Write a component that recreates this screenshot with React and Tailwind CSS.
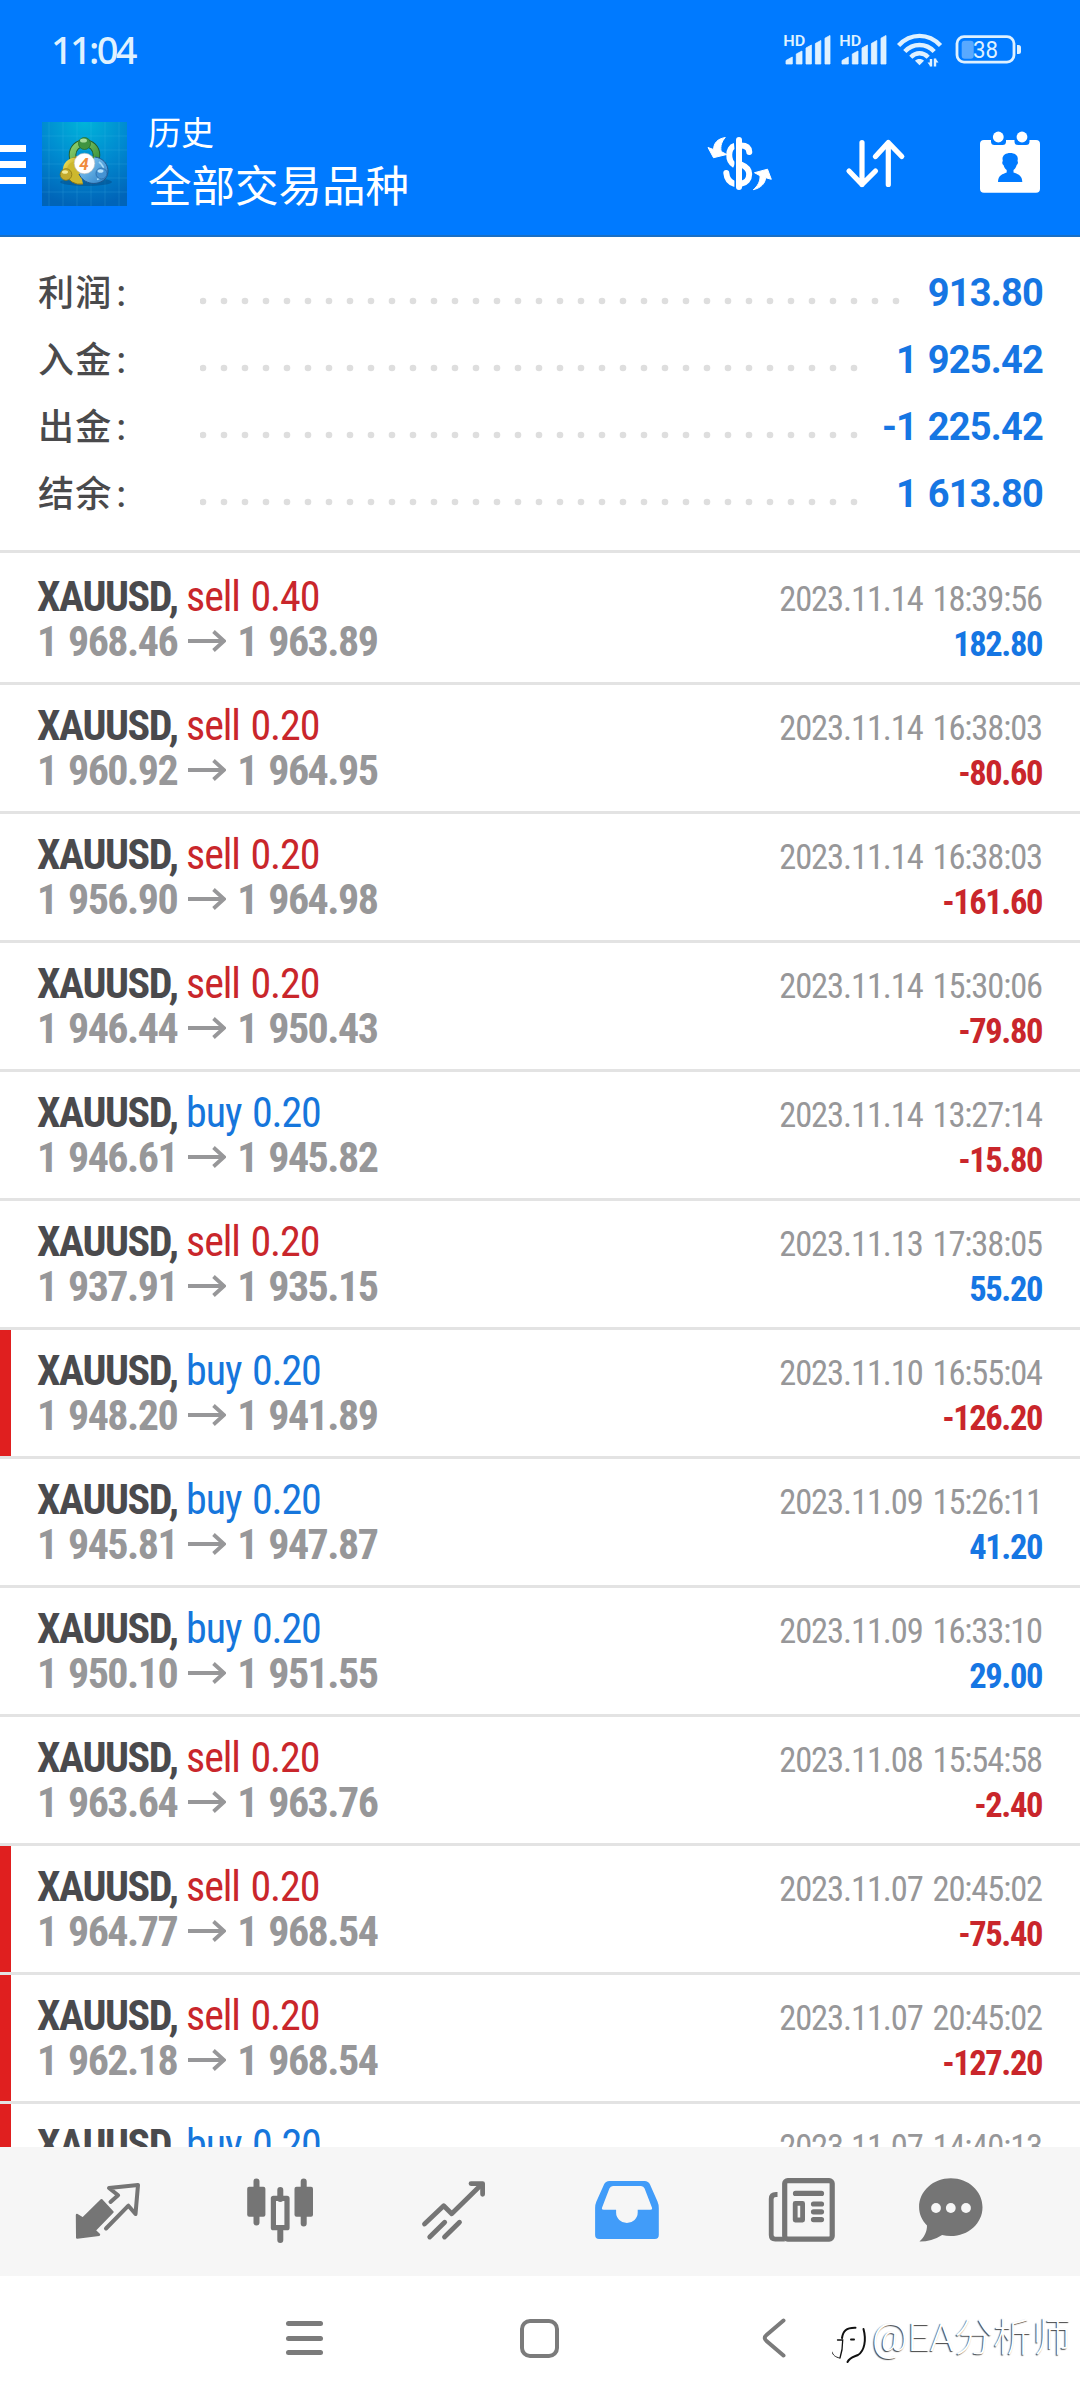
const SUMMARY = [
  { label: '利润', value: '913.80', dots: 34 },
  { label: '入金', value: '1 925.42', dots: 32 },
  { label: '出金', value: '-1 225.42', dots: 32 },
  { label: '结余', value: '1 613.80', dots: 32 },
]

const DEALS = [
  { side: 'sell', volume: '0.40', open: '1 968.46', close: '1 963.89', time: '2023.11.14 18:39:56', profit: '182.80' },
  { side: 'sell', volume: '0.20', open: '1 960.92', close: '1 964.95', time: '2023.11.14 16:38:03', profit: '-80.60' },
  { side: 'sell', volume: '0.20', open: '1 956.90', close: '1 964.98', time: '2023.11.14 16:38:03', profit: '-161.60' },
  { side: 'sell', volume: '0.20', open: '1 946.44', close: '1 950.43', time: '2023.11.14 15:30:06', profit: '-79.80' },
  { side: 'buy', volume: '0.20', open: '1 946.61', close: '1 945.82', time: '2023.11.14 13:27:14', profit: '-15.80' },
  { side: 'sell', volume: '0.20', open: '1 937.91', close: '1 935.15', time: '2023.11.13 17:38:05', profit: '55.20' },
  { side: 'buy', volume: '0.20', open: '1 948.20', close: '1 941.89', time: '2023.11.10 16:55:04', profit: '-126.20', stop: true },
  { side: 'buy', volume: '0.20', open: '1 945.81', close: '1 947.87', time: '2023.11.09 15:26:11', profit: '41.20' },
  { side: 'buy', volume: '0.20', open: '1 950.10', close: '1 951.55', time: '2023.11.09 16:33:10', profit: '29.00' },
  { side: 'sell', volume: '0.20', open: '1 963.64', close: '1 963.76', time: '2023.11.08 15:54:58', profit: '-2.40' },
  { side: 'sell', volume: '0.20', open: '1 964.77', close: '1 968.54', time: '2023.11.07 20:45:02', profit: '-75.40', stop: true },
  { side: 'sell', volume: '0.20', open: '1 962.18', close: '1 968.54', time: '2023.11.07 20:45:02', profit: '-127.20', stop: true },
  { side: 'buy', volume: '0.20', time: '2023.11.07 14:40:13', stop: true },
]

function Signal() {
  return (
    <svg width="56" height="40" viewBox="0 0 56 40" fill="currentColor">
      <text x="3.2" y="16" fontSize="15" fontWeight="600" textLength="22" lengthAdjust="spacingAndGlyphs">HD</text>
      <path d="M6 34v-3.5l6.3-3.5v7zM16.3 34V24l5.7-3v13zM26 34V18l5.4-3v19zM35.4 34V13.5l5.4-3V34zM45 34V8.2l5-2.7V34z" stroke="currentColor" strokeWidth="0.8" strokeLinejoin="round" />
    </svg>
  )
}

function Wifi() {
  return (
    <svg width="50" height="40" viewBox="0 0 50 40" fill="none" stroke="currentColor" strokeWidth="4.4">
      <path d="M2.6 15.5C14.5 2.7 32.5 2.7 44.5 15.5" />
      <path d="M8.8 21.5C17 12.8 30 12.8 38.2 21.5" />
      <path d="M14.8 27.2C20 22 27 22 32.2 27.2" />
      <path d="M23.5 35.3l-4.5-4.6c2-2.4 7-2.4 9 0z" fill="currentColor" stroke="none" />
      <path d="M35 36.5v-7.5M39 28.5v8" strokeWidth="2.4" />
      <path d="M31.5 32.5h3v4zM42.5 32.5h-3v-4z" fill="currentColor" stroke="none" />
    </svg>
  )
}

function Battery() {
  return (
    <svg width="74" height="40" viewBox="0 0 74 40" fill="currentColor">
      <rect x="5" y="6.6" width="57" height="25.5" rx="7" fill="none" stroke="currentColor" strokeWidth="2.8" />
      <rect x="9.7" y="10.7" width="12" height="18" rx="3" opacity="0.4" />
      <path d="M65 15h1.5a2.5 2.5 0 012.5 2.5v4a2.5 2.5 0 01-2.5 2.5H65z" />
      <text x="33.5" y="28" fontSize="24" textAnchor="middle" textLength="25" lengthAdjust="spacingAndGlyphs">38</text>
    </svg>
  )
}

function AppLogo() {
  return (
    <svg width="85" height="84" viewBox="0 0 85 84" className="block">
      <defs>
        <radialGradient id="sky" cx="0.5" cy="0" r="1">
          <stop offset="0" stopColor="#00b4da" />
          <stop offset="0.5" stopColor="#008bd0" />
          <stop offset="1" stopColor="#0064b8" />
        </radialGradient>
        <linearGradient id="green" x1="0" y1="0" x2="1" y2="1">
          <stop offset="0" stopColor="#8ccf6c" />
          <stop offset="1" stopColor="#2f8a35" />
        </linearGradient>
        <linearGradient id="yellow" x1="0" y1="0" x2="1" y2="1">
          <stop offset="0" stopColor="#efe25a" />
          <stop offset="1" stopColor="#b49a1c" />
        </linearGradient>
        <linearGradient id="blue" x1="0" y1="0" x2="1" y2="1">
          <stop offset="0" stopColor="#8fd0f5" />
          <stop offset="1" stopColor="#2a80c8" />
        </linearGradient>
      </defs>
      <rect width="85" height="84" fill="url(#sky)" />
      <path d="M7 0v84M21 0v84M35 0v84M49 0v84M63 0v84M77 0v84M0 14h85M0 28h85M0 42h85M0 56h85M0 70h85" stroke="#5cc4ee" strokeOpacity="0.16" />
      <ellipse cx="44" cy="60" rx="26" ry="4" fill="#063f73" opacity="0.4" />
      <circle cx="42.5" cy="33" r="12" fill="none" stroke="#245f2a" strokeWidth="7.5" />
      <circle cx="42.5" cy="33" r="12" fill="none" stroke="url(#green)" strokeWidth="5.6" />
      <path d="M41 62A14.5 14 0 1135 34.5" fill="#cdb82e" stroke="#85741a" />
      <path d="M33 37.5c-8 1-12 8-9 14" fill="none" stroke="url(#yellow)" strokeWidth="4" />
      <path d="M53 35c13 2 16 15 10 22-7 7-21 6-26-5" fill="url(#blue)" stroke="#1f568e" />
      <path d="M57 40c7 5 6 15-2 17.5" fill="none" stroke="#a3daf8" strokeWidth="1.6" />
      <circle cx="42.5" cy="21.5" r="6" fill="#3f9440" stroke="#26702b" strokeWidth="0.8" />
      <ellipse cx="41.5" cy="18.5" rx="3.5" ry="2" fill="#a5dc9a" />
      <circle cx="24" cy="52.5" r="5.8" fill="#c2ab2d" stroke="#8a7817" strokeWidth="0.8" />
      <ellipse cx="23" cy="50" rx="3" ry="1.8" fill="#f3ec98" />
      <circle cx="59.5" cy="51.5" r="5.5" fill="#4593d3" stroke="#2868a6" strokeWidth="0.8" />
      <ellipse cx="58.5" cy="49" rx="3" ry="1.8" fill="#b8e2fa" />
      <circle cx="42.5" cy="41.5" r="10.3" fill="#fff" stroke="#bdbdbd" strokeWidth="0.6" />
      <text x="42" y="47.5" fontSize="17" fontWeight="700" fontStyle="italic" textAnchor="middle" fill="#f08a3c">4</text>
    </svg>
  )
}

function CurrencyIcon() {
  return (
    <svg width="72" height="72" viewBox="0 0 72 72" fill="none" stroke="currentColor" strokeWidth="6">
      <path d="M21.3 9.5C13 11 10 15 9.500 21.500L4 19.500l5.500 10.200 13.200-3.200-5.500-3C16 18 18 13 21.300 9.500z" fill="currentColor" strokeWidth="1" strokeLinejoin="round" />
      <path d="M30.5 18C24 19.5 23 33 30.5 37" />
      <path d="M22.3 45c.5 6 3.7 9.5 8.2 10.8" strokeLinecap="round" />
      <path d="M37 17.6c5 0 8 2.2 8.3 6.4" strokeLinecap="round" />
      <path d="M37 36.5c5 2 8.2 5 8.2 9.5 0 5-3.2 9-8.2 9.8" />
      <path d="M31.2 10v51" stroke="#007aff" strokeWidth="1.6" />
      <path d="M35 12v47" strokeLinecap="round" />
      <path d="M49.3 61.7C56.5 60 61 56 61.7 49.7l5.6 1.6L63.5 41.2l-13 3.5 5.5 3C56.5 54 53 58.5 49.3 61.7z" fill="currentColor" strokeWidth="1" strokeLinejoin="round" />
    </svg>
  )
}

function SortIcon() {
  return (
    <svg width="72" height="72" viewBox="0 0 72 72" fill="none" stroke="currentColor" strokeWidth="5.2" strokeLinecap="round" strokeLinejoin="round">
      <path d="M23 14.5V56.5M10 43l13 13.5L36.5 43" />
      <path d="M49.3 56.5V14.5M36.5 28.5l12.8-14 13.5 14" />
    </svg>
  )
}

function CalendarIcon() {
  return (
    <svg width="72" height="72" viewBox="0 0 72 72" fill="currentColor">
      <path d="M10 12h7v1.500q0 3.500 3.500 3.500h8q3.500 0 3.500-3.500V12h8.500v1.500q0 3.500 3.500 3.500h8q3.500 0 3.500-3.500V12h6.500q4 0 4 4v44.700q0 4-4 4H10q-4 0-4-4V16q0-4 4-4z" />
      <circle cx="24.3" cy="9" r="5.4" />
      <circle cx="48" cy="9" r="5.4" />
      <path d="M28.5 31c0-4 3.5-6 7.7-6s7.6 2 7.6 6l-.3 2c1 1.5.2 3.5-.8 4-.7 2.5-2 4.2-3.2 5v2.5c4 1.500 8.800 2.500 8.800 9.500H24c0-7 5-8 8.700-9.500V42c-1.200-.8-2.500-2.500-3.200-5-1-.5-1.800-2.500-.7-4z" fill="#007aff" />
    </svg>
  )
}

function ArrowRight() {
  return (
    <svg width="38" height="24" viewBox="0 0 38 24" fill="none" stroke="currentColor" strokeWidth="3.8" className="mx-[11px]">
      <path d="M0 11h36" />
      <path d="M25.5 1.5L36 11 25.5 20.5" />
    </svg>
  )
}

function QuotesIcon() {
  return (
    <svg width="72" height="72" viewBox="0 0 72 72" fill="none" stroke="currentColor" strokeWidth="4" strokeLinejoin="round">
      <path d="M5 41l5.8 3.5 18.8-18.3L40.5 38 22.5 56.5l4.5 4.2L5.2 63.5z" fill="currentColor" strokeWidth="2.4" />
      <path d="M38.5 28l7.6-6.7L37 14l29-3-2.5 29-7.1-8.3L34 54.5" strokeLinecap="round" />
    </svg>
  )
}

function ChartIcon() {
  return (
    <svg width="72" height="72" viewBox="0 0 72 72" fill="currentColor" stroke="currentColor" strokeWidth="6" strokeLinecap="round">
      <path d="M11.500 7.500v41M35.300 16v9M35.300 57v9M58.700 7.500v42" />
      <rect x="2.200" y="12.700" width="18.200" height="30" rx="2" stroke="none" />
      <rect x="49.500" y="12.700" width="18.500" height="30" rx="2" stroke="none" />
      <rect x="28.400" y="24.300" width="13.600" height="29.400" fill="none" strokeWidth="5.200" strokeLinejoin="round" />
    </svg>
  )
}

function TradeIcon() {
  return (
    <svg width="72" height="72" viewBox="0 0 72 72" fill="none" stroke="currentColor" strokeWidth="4.8" strokeLinecap="round" strokeLinejoin="round">
      <path d="M5.5 50l19.2-18.3 8 8L62.5 10.500" />
      <path d="M52 9.600h11.600v10.700" />
      <path d="M10.700 63l15-14.800M25.500 63l15-14.800" />
    </svg>
  )
}

function HistoryIcon() {
  return (
    <svg width="72" height="72" viewBox="0 0 72 72" fill="#419cf9" fillRule="evenodd">
      <path d="M17.500 7h35q4 0 5.500 3.500l7.500 17q1.300 3 1.300 6.500v27q0 4-4 4H7.100q-4 0-4-4V34q0-3.500 1.300-6.500l7.600-17Q13.500 7 17.500 7zM21 12q-2.600 0-3.600 2.500l-7.300 19q-.8 2.200 1.500 2.200h12.500V38.500a10.800 10.500 0 0021.600 0v-2.800h12.700q2.300 0 1.500-2.200l-7.300-19Q51.600 12 49 12z" />
    </svg>
  )
}

function NewsIcon() {
  return (
    <svg width="72" height="72" viewBox="0 0 72 72" fill="none" stroke="currentColor" strokeWidth="5.2" strokeLinecap="round" strokeLinejoin="round">
      <rect x="19.7" y="6.6" width="47.5" height="58.5" rx="3" />
      <path d="M12.5 20.5h-1.5q-4.800 0-4.800 4.500v36q0 4.100 4.100 4.100h9.500" strokeLinecap="butt" strokeWidth="4.8" />
      <path d="M30.5 19.4h26M48.5 30h8M48.5 37.8h8M48.5 45.6h8" />
      <rect x="30.2" y="29.4" width="7.4" height="16.6" strokeWidth="4.8" />
    </svg>
  )
}

function ChatIcon() {
  return (
    <svg width="72" height="72" viewBox="0 0 72 72" fill="currentColor">
      <path d="M35.8 4.3C53.3 4.3 67.5 17 67.5 33.2S53.3 62 35.8 62c-3 0-6-.4-8.7-1.1C20 65.5 12 67.6 4.5 67.5 9.5 63 12 57.5 12 51.5 7 46.5 4.1 40 4.1 33.2 4.1 17 18.3 4.3 35.8 4.3z" />
      <g fill="#f6f6f6">
        <circle cx="21" cy="34" r="4.9" />
        <circle cx="35.8" cy="34" r="4.9" />
        <circle cx="51" cy="34" r="4.9" />
      </g>
    </svg>
  )
}

function WatermarkMark() {
  return (
    <svg width="40" height="52" viewBox="0 0 40 52" fill="none" stroke="#111" strokeLinecap="round">
      <path d="M10 26c1-7 4-10.5 13.5-10.3" strokeWidth="2" />
      <path d="M5.5 28h5.2c0 6-.7 12-2.7 18" strokeWidth="1.3" />
      <path d="M0 40c1 3 3 5 7.5 6" strokeWidth="0.9" />
      <path d="M31.5 17c3 11 1 22-5.5 26-4 2-8 2-10.5 7" strokeWidth="2" />
      <path d="M19 27.5h3" strokeWidth="2" />
    </svg>
  )
}

function SummaryRow({ label, value, dots }) {
  return (
    <div className="flex h-[67px] items-center justify-between">
      <span className="w-[162px] shrink-0 pt-0.5 text-[36px] leading-none font-medium tracking-[1.2px] text-[#4a4a4c]">
        {label}<span className="ml-1">:</span>
      </span>
      <svg width={dots * 21} height="8" className="mt-[17px] mr-auto shrink-0" fill="#dedede">
        {Array.from({ length: dots }, (_, i) => (
          <circle key={i} cx={3 + i * 21} cy="4" r="3.3" />
        ))}
      </svg>
      <span className="text-[38px] leading-none font-bold tracking-[-0.8px] [word-spacing:2px] whitespace-pre text-[#1676e3]">{value}</span>
    </div>
  )
}

function DealRow({ deal }) {
  const sideColor = deal.side === 'buy' ? 'text-[#1676dc]' : 'text-[#c9262b]'
  const profitColor = deal.profit?.startsWith('-') ? 'text-[#c9262b]' : 'text-[#1676e3]'

  return (
    <div className="flex h-[129px] shrink-0 border-b-3 border-[#e3e3e3] font-['Roboto_Condensed',Roboto,sans-serif] [font-stretch:75%]">
      <div className={`w-[11px] shrink-0 ${deal.stop ? 'bg-[#e01f1f]' : ''}`} />
      <div className="flex flex-1 justify-between pt-[18px] pr-[38px] pl-[26px]">
        <div className="text-[42px] leading-[45px]">
          <div className="tracking-[-1.1px] whitespace-pre">
            <span className="font-bold tracking-[-1.4px] text-[#4a4a4d]">XAUUSD,</span>{' '}
            <span className={`[word-spacing:2px] ${sideColor}`}>{deal.side} {deal.volume}</span>
          </div>
          {deal.open && (
            <div className="flex items-center font-bold tracking-[-1.5px] [word-spacing:3px] text-[#979799]">
              {deal.open}
              <ArrowRight />
              {deal.close}
            </div>
          )}
        </div>
        <div className="pt-[3px] text-right text-[34.5px] leading-[45px]">
          <div className="tracking-[-1.1px] [word-spacing:3px] text-[#979799]">{deal.time}</div>
          <div className={`font-bold tracking-[-1.4px] ${profitColor}`}>{deal.profit}</div>
        </div>
      </div>
    </div>
  )
}

export default function App() {
  return (
    <div className="flex h-[2400px] w-[1080px] flex-col overflow-hidden bg-white font-[Roboto,'Noto_Sans_CJK_SC',sans-serif]">
      <header className="h-[237px] shrink-0 border-b-2 border-[#1a6fc4] bg-[#007aff] text-white">
        <div className="flex h-[100px] items-center justify-between pr-[54px] pl-[51px] text-[#dff1ff]">
          <span className="pb-0.5 font-['Noto_Sans'] text-[38px] leading-none font-medium tracking-[-2.7px]">11:04</span>
          <div className="flex">
            <Signal />
            <Signal />
            <div className="ml-1 flex gap-1.5">
              <Wifi />
              <Battery />
            </div>
          </div>
        </div>
        <div className="flex h-[128px] items-center pr-[34px]">
          <div className="flex w-[26px] flex-col gap-[9px]">
            <div className="h-[7px] bg-white" />
            <div className="h-[7px] bg-white" />
            <div className="h-[7px] bg-white" />
          </div>
          <div className="ml-4">
            <AppLogo />
          </div>
          <div className="ml-[21px] flex-1">
            <div className="text-[33px] leading-[47px]">历史</div>
            <div className="text-[43.5px] leading-[61px]">全部交易品种</div>
          </div>
          <div className="flex gap-[63px]">
            <CurrencyIcon />
            <SortIcon />
            <CalendarIcon />
          </div>
        </div>
      </header>

      <section className="h-[316px] shrink-0 border-b-3 border-[#e3e3e3] pt-[22px] pr-[37px] pl-[38px]">
        {SUMMARY.map((row) => (
          <SummaryRow key={row.label} {...row} />
        ))}
      </section>

      <main className="flex min-h-0 flex-1 flex-col overflow-hidden pt-[3px]">
        {DEALS.map((deal, i) => (
          <DealRow key={i} deal={deal} />
        ))}
      </main>

      <nav className="flex h-[129px] shrink-0 items-start bg-[#f6f6f6] pt-[27px] pr-[93px] pl-[72px] text-[#757575]">
        <div className="flex flex-1 justify-between pr-[78px]">
          <QuotesIcon />
          <ChartIcon />
          <TradeIcon />
          <HistoryIcon />
          <NewsIcon />
        </div>
        <ChatIcon />
      </nav>

      <footer className="flex h-[124px] shrink-0 items-center pl-[286px] text-[#7b7b7b]">
        <div className="flex w-[37px] flex-col gap-[9.5px]">
          <div className="h-[5px] rounded-full bg-current" />
          <div className="h-[5px] rounded-full bg-current" />
          <div className="h-[5px] rounded-full bg-current" />
        </div>
        <div className="ml-[197px] h-[39px] w-[39px] rounded-[10px] border-4 border-current" />
        <svg width="24" height="40" viewBox="0 0 24 40" fill="none" stroke="currentColor" strokeWidth="4" strokeLinecap="round" className="ml-[203px]">
          <path d="M21.5 2.5L4.5 17q-3.5 3 0 6l17 14.5" />
        </svg>
        <div className="ml-[46px] flex items-center">
          <WatermarkMark />
          <span className="text-[39px] leading-none font-light text-white [text-shadow:-1px_1px_1px_#444]">@EA分析师</span>
        </div>
      </footer>
    </div>
  )
}
